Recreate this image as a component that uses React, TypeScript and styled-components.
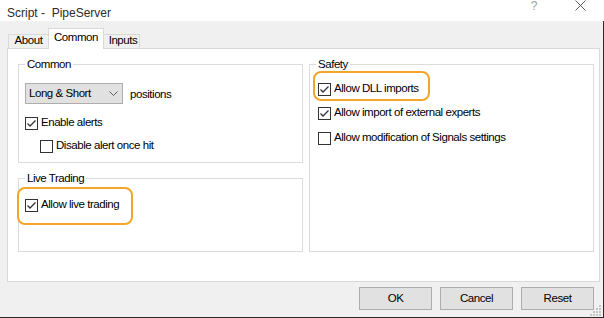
import React from "react";
import styled, { createGlobalStyle } from "styled-components";

const Global = createGlobalStyle`
  html, body { margin: 0; padding: 0; background: #ffffff; }
  body { width: 604px; height: 318px; overflow: hidden; }
`;

const Window = styled.div`
  width: 604px;
  height: 318px;
  display: flex;
  flex-direction: column;
  font-family: "Liberation Sans", Arial, sans-serif;
  font-size: 11.5px;
  letter-spacing: -0.45px;
  color: #000;
`;

const TitleBar = styled.div`
  height: 21px;
  flex: none;
  background: #fff;
  display: flex;
  justify-content: space-between;
  align-items: flex-start;
`;

const Title = styled.div`
  padding: 6px 0 0 7px;
  font-size: 12px;
  line-height: 14px;
  letter-spacing: 0;
  color: #2b2b2b;
  white-space: pre;
`;

const Caption = styled.div`
  display: flex;
  margin-right: 1px;
`;

const CaptionButton = styled.div`
  width: 46px;
  height: 14px;
  display: flex;
  justify-content: center;
  align-items: flex-start;
  padding-top: 0;
  color: #a0a0a0;
  font-size: 12px;
  line-height: 13px;
  letter-spacing: 0;
`;

const Body = styled.div`
  flex: 1;
  position: relative;
  display: flex;
  flex-direction: column;
  box-sizing: border-box;
  background: #f0f0f0;
  border-right: 1px solid #2a2a2a;
  border-bottom: 1px solid #2a2a2a;
  padding: 7px 3px 7px 7px;
`;

const TabStrip = styled.div`
  display: flex;
  align-items: flex-end;
  height: 21px;
  margin-bottom: -1px;
  padding-left: 1px;
  position: relative;
  z-index: 1;
`;

const Tab = styled.div<{ $active?: boolean; $w: number; $first?: boolean; $pl?: number }>`
  box-sizing: border-box;
  width: ${(p) => p.$w}px;
  height: ${(p) => (p.$active ? 21 : 14)}px;
  margin-bottom: ${(p) => (p.$active ? 0 : 1)}px;
  margin-left: ${(p) => (p.$first ? 0 : -1)}px;
  border: 1px solid #d9d9d9;
  border-bottom: none;
  background: ${(p) => (p.$active ? "#ffffff" : "#f0f0f0")};
  text-align: center;
  line-height: ${(p) => (p.$active ? 13 : 11)}px;
  padding-top: ${(p) => (p.$active ? 2 : 0)}px;
  padding-left: ${(p) => p.$pl ?? 0}px;
  position: relative;
  z-index: ${(p) => (p.$active ? 2 : 1)};
`;

const Panel = styled.div`
  width: 593px;
  height: 234px;
  box-sizing: border-box;
  background: #fff;
  border: 1px solid #d9d9d9;
  padding: 8px 5px 29px 10px;
  display: grid;
  grid-template-columns: 285px 285px;
  column-gap: 6px;
`;

const Column = styled.div`
  display: flex;
  flex-direction: column;
  gap: 8px;
`;

const Group = styled.fieldset<{ $grow?: boolean }>`
  margin: 0;
  padding: 0;
  min-width: 0;
  border: 1px solid #dcdcdc;
  flex: ${(p) => (p.$grow ? "1" : "none")};
`;

const Legend = styled.legend`
  margin-left: 6px;
  padding: 0 2px;
  line-height: 14px;
  color: #000;
`;

const GroupBody = styled.div<{ $pt: number; $pl: number; $pb?: number }>`
  display: flex;
  flex-direction: column;
  align-items: flex-start;
  padding: ${(p) => p.$pt}px 0 ${(p) => p.$pb ?? 0}px ${(p) => p.$pl}px;
`;

const ComboLine = styled.div`
  display: flex;
  align-items: center;
  gap: 7px;
`;

const Combo = styled.div`
  box-sizing: border-box;
  width: 98px;
  height: 21px;
  border: 1px solid #adadad;
  background: #e1e1e1;
  display: flex;
  align-items: center;
  justify-content: space-between;
  padding: 0 4px 0 3px;
  line-height: 19px;
`;

const CheckRow = styled.label<{ $indent?: number; $mt?: number }>`
  position: relative;
  display: flex;
  align-items: flex-start;
  height: 16px;
  line-height: 16px;
  margin-left: ${(p) => p.$indent ?? 0}px;
  margin-top: ${(p) => p.$mt ?? 0}px;
  white-space: nowrap;
`;

const Box = styled.span`
  box-sizing: border-box;
  width: 13px;
  height: 13px;
  margin-top: 3px;
  border: 1px solid #333;
  background: #fff;
  display: flex;
  flex: none;
`;

const Label = styled.span`
  margin-left: 3px;
`;

const Highlight = styled.span<{ $x: number; $y: number; $w: number; $h: number }>`
  position: absolute;
  left: ${(p) => p.$x}px;
  top: ${(p) => p.$y}px;
  width: ${(p) => p.$w}px;
  height: ${(p) => p.$h}px;
  box-sizing: border-box;
  border: 2px solid #f3a52a;
  border-radius: 8px;
  pointer-events: none;
`;

const ButtonBar = styled.div`
  display: flex;
  justify-content: flex-end;
  gap: 8px;
  margin-top: 5px;
  padding-right: 6px;
`;

const Button = styled.button`
  width: 73px;
  height: 23px;
  box-sizing: border-box;
  border: 1px solid #adadad;
  background: #e1e1e1;
  font: inherit;
  letter-spacing: inherit;
  line-height: 21px;
  padding: 0;
  color: #000;
`;

const Grip = styled.svg`
  position: absolute;
  right: 1px;
  bottom: 1px;
`;

const Check = ({ on }: { on?: boolean }) => (
  <Box>
    {on && (
      <svg width="11" height="11" viewBox="0 0 11 11">
        <polyline points="1.5,5.5 4,8 9.5,2.5" fill="none" stroke="#333" strokeWidth="1.3" />
      </svg>
    )}
  </Box>
);

const Chevron = () => (
  <svg width="9" height="5" viewBox="0 0 9 5">
    <polyline points="0.5,0.5 4.5,4.5 8.5,0.5" fill="none" stroke="#606060" strokeWidth="1" />
  </svg>
);

const CloseIcon = () => (
  <svg width="11" height="11" viewBox="0 0 11 11">
    <path d="M0.5 0.5 L10.5 10.5 M10.5 0.5 L0.5 10.5" stroke="#5a5a5a" strokeWidth="1" />
  </svg>
);

export default function App() {
  return (
    <>
      <Global />
      <Window>
        <TitleBar>
          <Title>{"Script -  PipeServer"}</Title>
          <Caption>
            <CaptionButton>?</CaptionButton>
            <CaptionButton>
              <CloseIcon />
            </CaptionButton>
          </Caption>
        </TitleBar>
        <Body>
          <TabStrip>
            <Tab $first $w={41}>About</Tab>
            <Tab $active $w={56}>Common</Tab>
            <Tab $w={37} $pl={3}>Inputs</Tab>
          </TabStrip>
          <Panel>
            <Column>
              <Group>
                <Legend>Common</Legend>
                <GroupBody $pt={12} $pl={6} $pb={9}>
                  <ComboLine>
                    <Combo>
                      <span>Long &amp; Short</span>
                      <Chevron />
                    </Combo>
                    <span>positions</span>
                  </ComboLine>
                  <CheckRow $mt={10}>
                    <Check on />
                    <Label>Enable alerts</Label>
                  </CheckRow>
                  <CheckRow $mt={7} $indent={15}>
                    <Check />
                    <Label>Disable alert once hit</Label>
                  </CheckRow>
                </GroupBody>
              </Group>
              <Group $grow>
                <Legend>Live Trading</Legend>
                <GroupBody $pt={11} $pl={6}>
                  <CheckRow>
                    <Check on />
                    <Label>Allow live trading</Label>
                    <Highlight $x={-8} $y={-9} $w={116} $h={38} />
                  </CheckRow>
                </GroupBody>
              </Group>
            </Column>
            <Group>
              <Legend>Safety</Legend>
              <GroupBody $pt={9} $pl={8}>
                <CheckRow>
                  <Check on />
                  <Label>Allow DLL imports</Label>
                  <Highlight $x={-5} $y={-9} $w={117} $h={30} />
                </CheckRow>
                <CheckRow $mt={8}>
                  <Check on />
                  <Label>Allow import of external experts</Label>
                </CheckRow>
                <CheckRow $mt={9}>
                  <Check />
                  <Label>Allow modification of Signals settings</Label>
                </CheckRow>
              </GroupBody>
            </Group>
          </Panel>
          <ButtonBar>
            <Button>OK</Button>
            <Button>Cancel</Button>
            <Button>Reset</Button>
          </ButtonBar>
          <Grip width="12" height="12" viewBox="0 0 12 12">
            <g fill="#c4c4c4">
              <rect x="9" y="1" width="2" height="2" />
              <rect x="6" y="4" width="2" height="2" />
              <rect x="9" y="4" width="2" height="2" />
              <rect x="3" y="7" width="2" height="2" />
              <rect x="6" y="7" width="2" height="2" />
              <rect x="9" y="7" width="2" height="2" />
              <rect x="0" y="10" width="2" height="2" />
              <rect x="3" y="10" width="2" height="2" />
              <rect x="6" y="10" width="2" height="2" />
              <rect x="9" y="10" width="2" height="2" />
            </g>
          </Grip>
        </Body>
      </Window>
    </>
  );
}
